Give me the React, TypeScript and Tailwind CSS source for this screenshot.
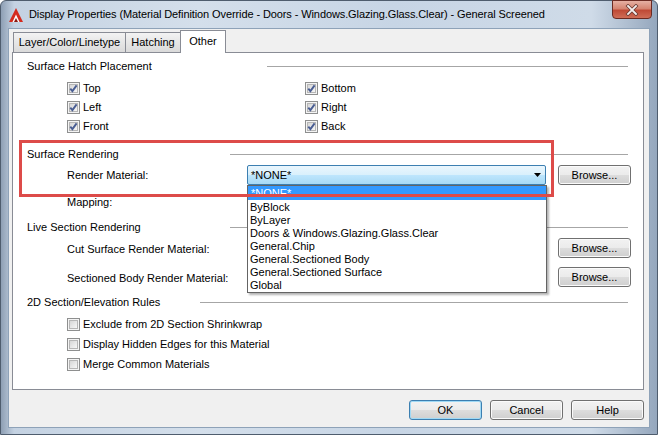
import React from "react";

function Check({ checked }: { checked?: boolean }) {
  return (
    <span className="relative w-[13px] h-[13px] shrink-0 border border-[#8e8f8f] bg-[#f4f4f4]">
      <span className="absolute inset-[1px] border border-[#b6b6b6] bg-[linear-gradient(135deg,#d6d6d6,#f7f7f7)]" />
      {checked && (
        <svg className="absolute left-0 top-0" width="11" height="11" viewBox="0 0 11 11">
          <path d="M2.3 5.6 L4.4 8.1 L8.6 2.4" fill="none" stroke="#4a5e93" strokeWidth="1.9" />
        </svg>
      )}
    </span>
  );
}

function Btn({ label, def, w }: { label: string; def?: boolean; w: string }) {
  return (
    <div
      className={
        "h-[20px] rounded-[3px] border flex items-center justify-center text-[11px] text-black bg-[linear-gradient(#f2f2f2,#ebebeb_50%,#dddddd_50%,#cfcfcf)] " +
        (def
          ? "border-[#3c7fb1] shadow-[inset_0_0_0_1px_#9fd9f5]"
          : "border-[#707070] shadow-[inset_0_0_0_1px_#fbfbfb]") +
        " " +
        w
      }
    >
      {label}
    </div>
  );
}

function Header({ label, lw }: { label: string; lw: string }) {
  return (
    <div className="flex items-center h-[14px] pl-[14px] pr-[15px]">
      <div className={"shrink-0 whitespace-nowrap " + lw}>{label}</div>
      <div className="flex-1 h-px bg-[#a6a6a6]" />
    </div>
  );
}

function CbRow({ a, b, h }: { a: string; b?: string; h: string }) {
  return (
    <div className={"flex items-center pl-[54px] " + h}>
      <div className="flex items-center gap-[3px] w-[238px]">
        <Check checked={!!b} />
        <span>{a}</span>
      </div>
      {b && (
        <div className="flex items-center gap-[3px]">
          <Check checked />
          <span>{b}</span>
        </div>
      )}
    </div>
  );
}

export default function App() {
  const items = [
    "ByBlock",
    "ByLayer",
    "Doors & Windows.Glazing.Glass.Clear",
    "General.Chip",
    "General.Sectioned Body",
    "General.Sectioned Surface",
    "Global",
  ];
  return (
    <div className="relative w-[658px] h-[435px] overflow-hidden font-['Liberation_Sans',Arial,sans-serif] text-[11px] text-black leading-none">
      <div className="w-[658px] h-[435px] flex flex-col rounded-t-[6px] border border-[#4f5d6e] bg-[linear-gradient(90deg,#8e9fb4,#c4d2e2_2%,#d4dfeb_30%,#c7d5e5_60%,#cfdbe8_90%,#95a7bd)]">
        {/* title bar */}
        <div className="h-[27px] flex items-center relative">
          <svg className="ml-[7px]" width="16" height="16" viewBox="0 0 16 16">
            <polygon points="1,15 8,1 15,15" fill="#d42b1e" />
            <polygon points="4.5,15 8,7.5 11.5,15" fill="#ffffff" />
            <polygon points="6,15 8,11 10,15" fill="#8a1a12" />
          </svg>
          <span className="ml-[5px] text-[11px] tracking-[-0.1px] whitespace-nowrap">
            Display Properties (Material Definition Override - Doors - Windows.Glazing.Glass.Clear) - General Screened
          </span>
          <div className="absolute right-[5px] top-[-1px] w-[40px] h-[19px] rounded-b-[4px] border border-[#6b2a22] bg-[linear-gradient(#e6b0a3,#d58471_45%,#bf4a36_55%,#cf6d57)] flex items-center justify-center">
            <svg width="14" height="12" viewBox="0 0 14 12">
              <path d="M3 2 L11 10 M11 2 L3 10" stroke="#6a3a32" strokeWidth="3.4" strokeLinecap="square" />
              <path d="M3 2 L11 10 M11 2 L3 10" stroke="#f4eeee" strokeWidth="1.8" strokeLinecap="square" />
            </svg>
          </div>
        </div>
        {/* client area */}
        <div className="mx-[7px] h-[400px] border border-[#8ea2b8] bg-[#f0f0f0] flex flex-col">
          {/* tabs */}
          <div className="flex items-end h-[23px] pl-[4px] relative z-10">
            <div className="w-[113px] h-[20px] border border-[#898c95] border-b-0 bg-[linear-gradient(#f3f3f3,#e6e6e6_50%,#dadada)] flex items-center justify-center">
              Layer/Color/Linetype
            </div>
            <div className="-ml-px w-[56px] h-[20px] border border-[#898c95] border-b-0 bg-[linear-gradient(#f3f3f3,#e6e6e6_50%,#dadada)] flex items-center justify-center">
              Hatching
            </div>
            <div className="-ml-px w-[46px] h-[23px] -mb-px border border-[#898c95] border-b-0 bg-white flex items-start pt-[5px] justify-center">
              Other
            </div>
          </div>
          {/* panel */}
          <div className="relative ml-[3px] mr-[5px] h-[338px] border border-[#898c95] bg-white flex flex-col">
            <div className="mt-[6px]">
              <Header label="Surface Hatch Placement" lw="w-[240px]" />
            </div>
            <div className="mt-[6px]">
              <CbRow a="Top" b="Bottom" h="h-[19px]" />
              <CbRow a="Left" b="Right" h="h-[19px]" />
              <CbRow a="Front" b="Back" h="h-[19px]" />
            </div>
            <div className="mt-[11px]">
              <Header label="Surface Rendering" lw="w-[203px]" />
            </div>
            <div className="mt-[4px] h-[20px] flex items-center pl-[54px]">
              <div className="w-[180px] pt-[1px]">Render Material:</div>
              <div className="w-[299px] h-[20px] rounded-[2px] border border-[#3c7fb1] bg-[linear-gradient(#eaf6fd,#d9f0fc_50%,#bee6fd_50%,#a7d9f5)] flex items-center pl-[3px] pr-[4px]">
                <span className="flex-1">*NONE*</span>
                <svg width="7" height="4" viewBox="0 0 7 4">
                  <polygon points="0,0 7,0 3.5,4" fill="#000" />
                </svg>
              </div>
              <div className="ml-[12px]">
                <Btn label="Browse..." w="w-[73px]" />
              </div>
            </div>
            <div className="mt-[10px] h-[14px] flex items-center pl-[54px]">Mapping:</div>
            <div className="mt-[11px]">
              <Header label="Live Section Rendering" lw="w-[203px]" />
            </div>
            <div className="mt-[4px] h-[20px] flex items-center pl-[54px]">
              <div className="w-[491px] pt-[3px]">Cut Surface Render Material:</div>
              <Btn label="Browse..." w="w-[73px]" />
            </div>
            <div className="mt-[9px] h-[20px] flex items-center pl-[54px]">
              <div className="w-[491px] pt-[2px]">Sectioned Body Render Material:</div>
              <Btn label="Browse..." w="w-[73px]" />
            </div>
            <div className="mt-[8px]">
              <Header label="2D Section/Elevation Rules" lw="w-[173px]" />
            </div>
            <div className="mt-[5px]">
              <CbRow a="Exclude from 2D Section Shrinkwrap" h="h-[20px]" />
              <CbRow a="Display Hidden Edges for this Material" h="h-[20px]" />
              <CbRow a="Merge Common Materials" h="h-[20px]" />
            </div>

            {/* dropdown list overlay */}
            <div className="absolute left-[234px] top-[132px] w-[300px] h-[108px] border border-[#646464] bg-white shadow-[2px_2px_2px_rgba(0,0,0,0.3)] flex flex-col">
              <div className="h-[14px] bg-[#3399ff] text-white pl-[3px] flex items-center">*NONE*</div>
              {items.map((t) => (
                <div key={t} className="h-[13px] pl-[2px] pt-[2px] flex items-center whitespace-nowrap">
                  {t}
                </div>
              ))}
            </div>
          </div>
          {/* buttons */}
          <div className="mt-[10px] flex justify-end gap-[8px] pr-[5px]">
            <Btn label="OK" def w="w-[73px]" />
            <Btn label="Cancel" w="w-[73px]" />
            <Btn label="Help" w="w-[73px]" />
          </div>
        </div>
      </div>
      {/* red annotation rectangle */}
      <div className="absolute left-[19px] top-[140px] w-[535px] h-[57px] border-[3px] border-[#dd4b49]" />
    </div>
  );
}
